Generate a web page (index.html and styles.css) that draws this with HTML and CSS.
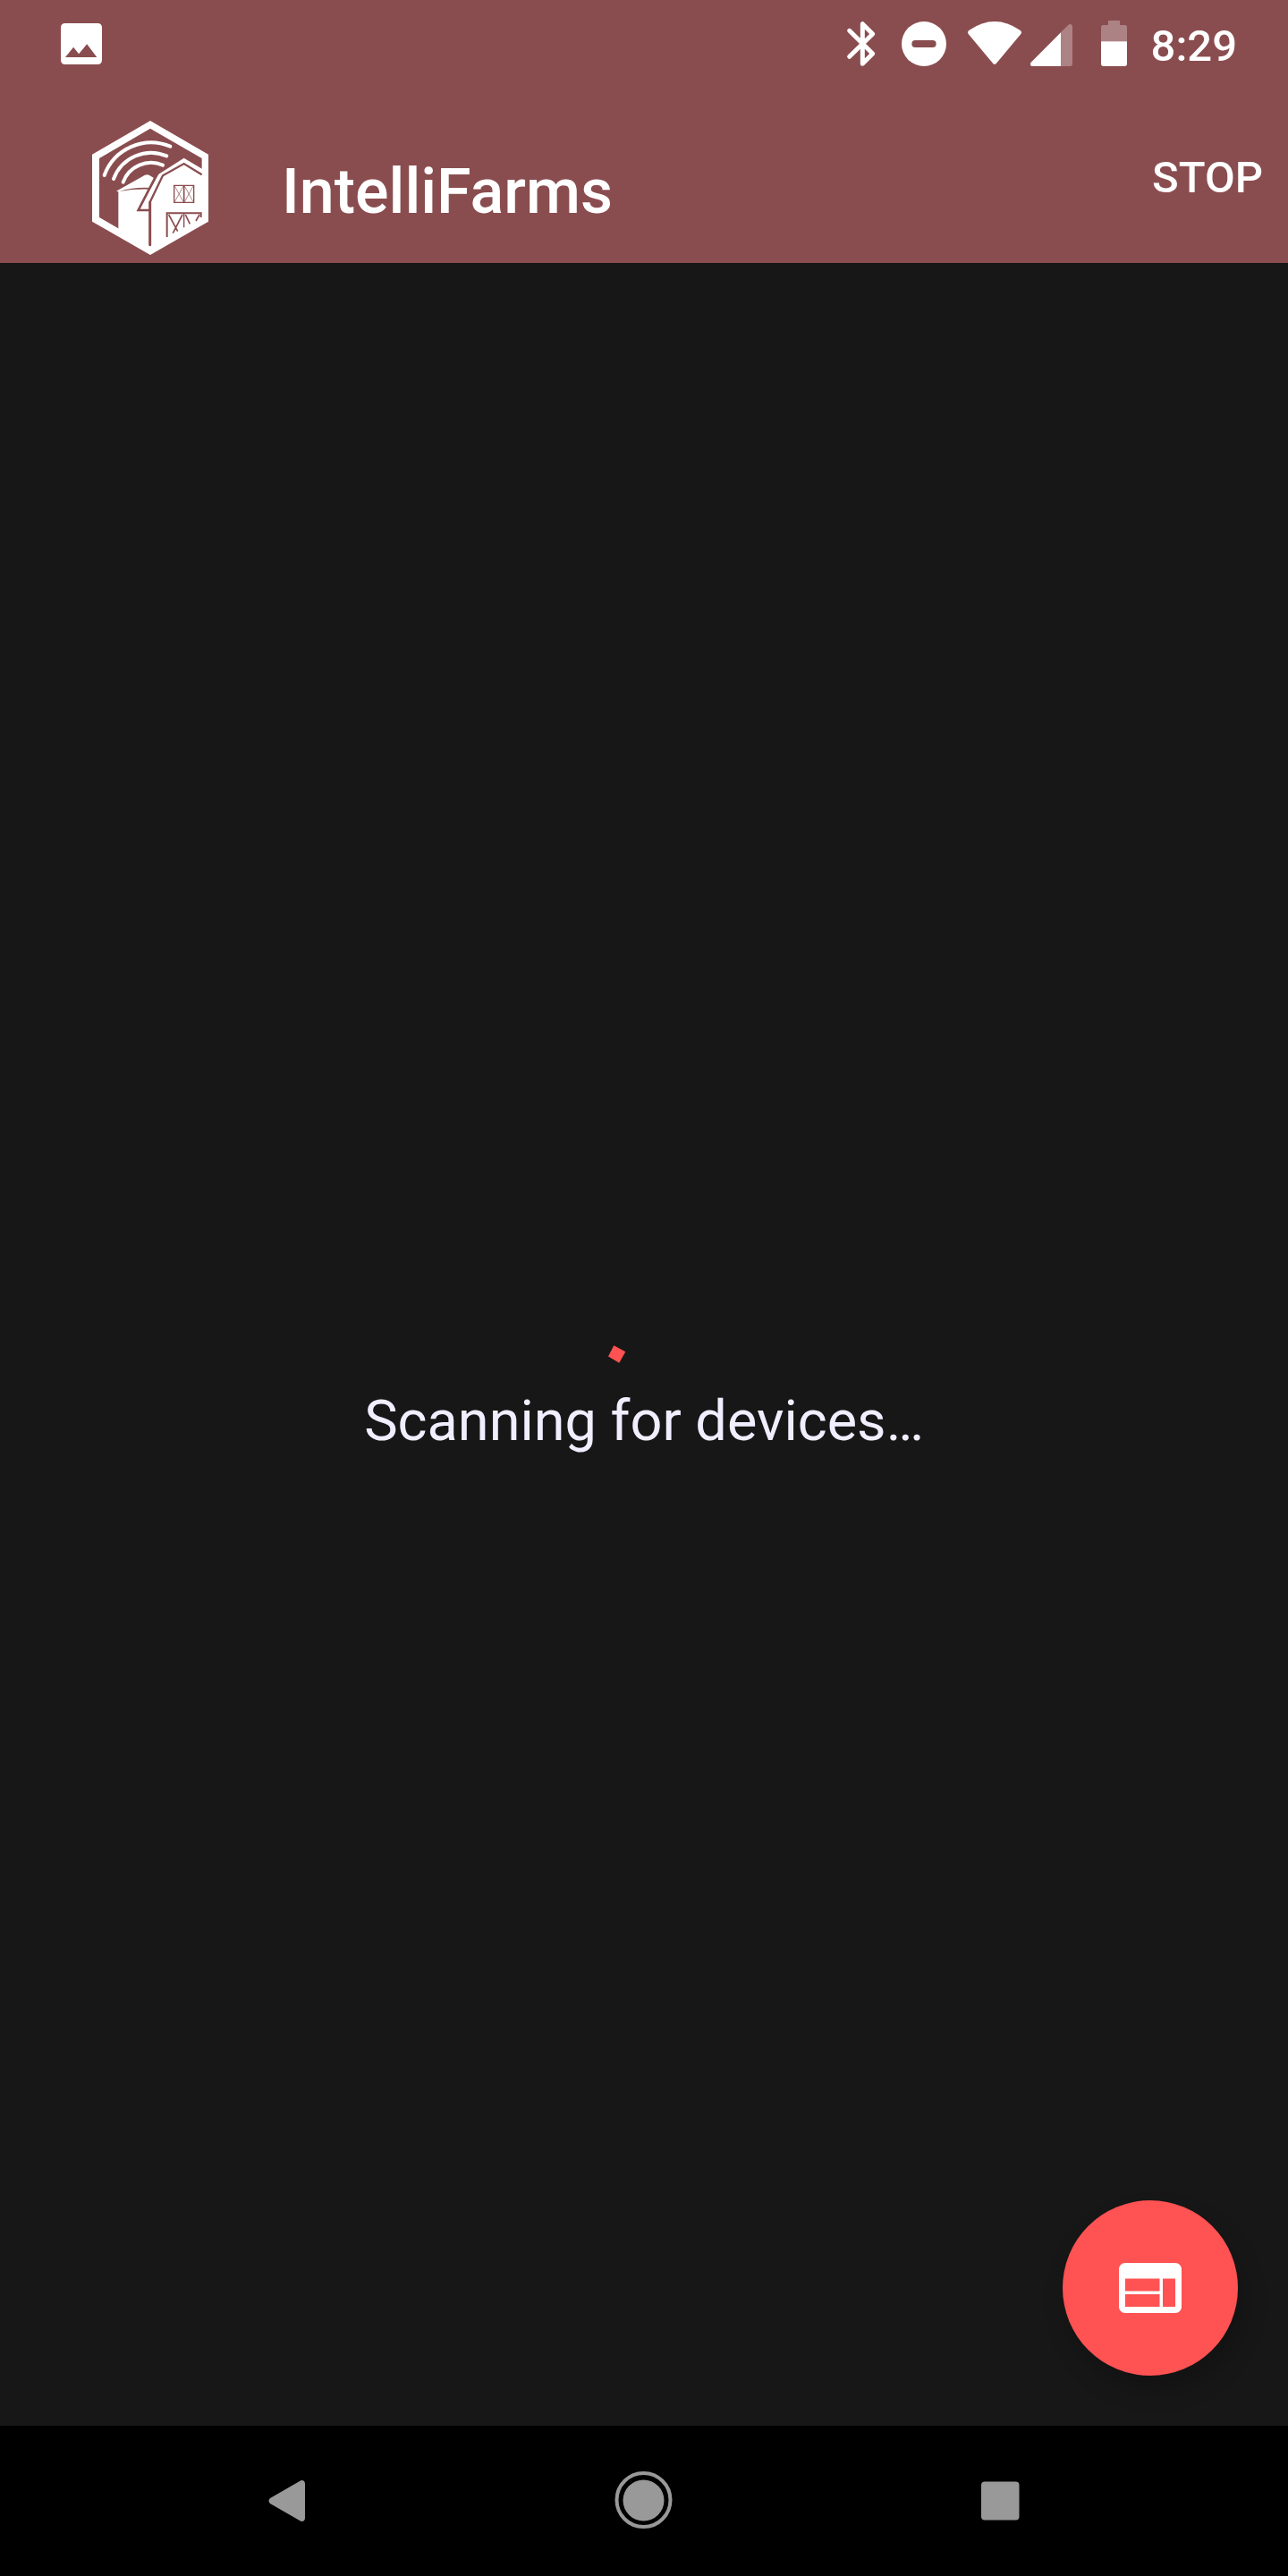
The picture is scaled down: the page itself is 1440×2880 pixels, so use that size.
FILE: index.html
```html
<!DOCTYPE html>
<html lang="en">
<head>
<meta charset="utf-8">
<meta name="viewport" content="width=device-width, initial-scale=1">
<title>IntelliFarms</title>
<link rel="stylesheet" href="styles.css">
</head>
<body>
<div class="screen">
  <header class="header">
    <div class="status-bar">
      <svg class="status-photo" viewBox="205 78 137 137" aria-hidden="true">
        <path fill="currentColor" fill-rule="evenodd" d="M220 78H327Q342 78 342 93V200Q342 215 327 215H220Q205 215 205 200V93Q205 78 220 78ZM220 191H325L292 147L265 180L247 158Z"/>
      </svg>
      <div class="status-icons">
        <svg class="icon-bluetooth" viewBox="81 72 111 150" aria-hidden="true">
          <path d="M89 190L167 114L133 80V214L167 180L89 103" fill="none" stroke="currentColor" stroke-width="15" stroke-linecap="round" stroke-linejoin="round"/>
        </svg>
        <svg class="icon-dnd" viewBox="264 72 150 150" aria-hidden="true">
          <circle cx="339" cy="147" r="75" fill="currentColor"/>
          <rect class="cutout" x="298" y="135" width="82" height="24" rx="12"/>
        </svg>
        <div class="network">
          <svg class="icon-wifi" viewBox="486 72 180 150" aria-hidden="true">
            <path fill="currentColor" d="M491 101Q576 43 661 101Q669 107 664 114L582 212Q576 219 570 212L488 114Q483 107 491 101Z"/>
          </svg>
          <svg class="icon-signal" viewBox="6 72 141 150" aria-hidden="true">
            <path fill="currentColor" fill-opacity=".3" d="M108 108L133 84Q138 79 143 82Q147 84 147 90V215Q147 222 140 222H108Z"/>
            <path fill="currentColor" d="M108 109V222H12Q6 222 6 216Q5 212 8 209Z"/>
          </svg>
        </div>
        <svg class="icon-battery" viewBox="219 72 120 150" aria-hidden="true">
          <path fill="currentColor" fill-opacity=".3" d="M267 69H306V84H322Q330 84 330 92V139H243V92Q243 84 251 84H267Z"/>
          <path fill="currentColor" d="M243 139H330V214Q330 222 322 222H251Q243 222 243 214Z"/>
        </svg>
        <time class="clock">8:29</time>
      </div>
    </div>
    <div class="app-bar">
      <div class="brand">
        <svg class="logo" viewBox="39 30 390 462" aria-hidden="true">
          <path fill="currentColor" d="M234 30L429 143V368L234 480L39 368V143Z"/>
          <path class="cutout" d="M234 56L407 156V354L234 453L63 354V156Z"/>
          <g fill="none" stroke="currentColor" stroke-width="12" stroke-linecap="round">
            <path d="M80 213A167 167 0 0 1 301 116"/>
            <path d="M111 225A134 134 0 0 1 289 148"/>
            <path d="M143 236A100 100 0 0 1 276 179"/>
          </g>
          <path fill="currentColor" d="M120 266L216 212Q223 209 230 212L246 222L236 260V460L127 396V268Z"/>
          <path fill="currentColor" d="M194 331L262 209L347 155L410 193V362L234 462V331Z"/>
          <path class="cutout" d="M130 267Q180 252 234 255V260Q180 258 130 267Z"/>
          <g class="lines" fill="none">
            <path stroke-width="8" d="M260 202L194 330H233"/>
            <path stroke-width="7" d="M407 211L347 174L276 214L233 303"/>
            <path stroke-width="9" stroke-linecap="round" d="M233 303V446"/>
            <path stroke-width="4" d="M314 247H380V304H314Z"/>
            <path stroke-width="5" d="M347 247V304"/>
            <path stroke-width="2" d="M316 249L345 302M345 249L316 302M349 249L378 302M378 249L349 302"/>
            <path stroke-width="6" d="M287 340H407M290 340V420M404 340V354"/>
            <path stroke-width="5" d="M296 345L326 401M342 345L310 407M352 345L367 376M399 345L387 366"/>
            <path stroke-width="4" d="M347 342V388"/>
          </g>
        </svg>
        <h1 class="title">IntelliFarms</h1>
      </div>
      <button class="stop" type="button">STOP</button>
    </div>
  </header>

  <main class="content">
    <div class="scan" role="status">
      <svg class="spinner" viewBox="0 0 172 172" aria-hidden="true">
        <path fill="currentColor" d="M52.300 125.300L65.300 132.300L58.300 144.700L46 137.500Z"/>
      </svg>
      <p class="scan-label">Scanning for devices…</p>
    </div>
    <button class="fab" type="button" aria-label="Web dashboard">
      <svg class="fab-icon" viewBox="0 0 24 24" aria-hidden="true">
        <path fill="currentColor" d="M20 4H4c-1.100 0-1.990.9-1.990 2L2 18c0 1.100.9 2 2 2h16c1.100 0 2-.9 2-2V6c0-1.100-.9-2-2-2zm-5 14H4v-4h11v4zm0-5H4V9h11v4zm5 5h-4V9h4v9z"/>
      </svg>
    </button>
  </main>

  <nav class="nav-bar" aria-label="System navigation">
    <button class="nav-button" type="button" aria-label="Back">
      <svg class="nav-icon" viewBox="0 0 84 84" aria-hidden="true">
        <path fill="currentColor" d="M22 39L55 20Q58 18 60 20Q61 21 61 23V61Q61 63 60 64Q58 66 55 64L22 45Q19 42 22 39Z"/>
      </svg>
    </button>
    <button class="nav-button" type="button" aria-label="Home">
      <svg class="nav-icon" viewBox="0 0 84 84" aria-hidden="true">
        <circle cx="41.500" cy="41" r="30" fill="none" stroke="currentColor" stroke-width="4"/>
        <circle cx="41.500" cy="41.500" r="23" fill="currentColor"/>
      </svg>
    </button>
    <button class="nav-button" type="button" aria-label="Recent apps">
      <svg class="nav-icon" viewBox="0 0 84 84" aria-hidden="true">
        <rect x="21" y="20.500" width="42.500" height="43" rx="4" fill="currentColor"/>
      </svg>
    </button>
  </nav>
</div>
</body>
</html>
```
FILE: styles.css
```css
:root {
  --bar: #8a4d4f;
  --surface: #171717;
  --accent: #ff5252;
  --text: #f0eeff;
}

* {
  box-sizing: border-box;
}

body {
  margin: 0;
  background: var(--surface);
  color: #fff;
  font-family: Roboto, sans-serif;
}

button {
  margin: 0;
  padding: 0;
  border: 0;
  background: none;
  color: inherit;
  font: inherit;
}

svg {
  display: block;
  flex: none;
  overflow: visible;
}

.screen {
  display: flex;
  flex-direction: column;
  min-height: 100vh;
}

.header {
  background: var(--bar);
}

.cutout {
  fill: var(--bar);
}

.lines {
  stroke: var(--bar);
}

.status-bar {
  display: flex;
  align-items: center;
  justify-content: space-between;
  height: 98px;
  padding: 0 57px 0 68px;
}

.status-photo {
  width: 46px;
  height: 46px;
}

.status-icons {
  display: flex;
  align-items: center;
  gap: 24px;
}

.icon-bluetooth {
  width: 37px;
  height: 50px;
}

.icon-dnd {
  width: 50px;
  height: 50px;
}

.network {
  display: flex;
  gap: 10px;
}

.icon-wifi {
  width: 60px;
  height: 50px;
}

.icon-signal {
  width: 47px;
  height: 50px;
}

.icon-battery {
  width: 40px;
  height: 50px;
}

.clock {
  padding-top: 4px;
  font-size: 49px;
  font-weight: 500;
}

.app-bar {
  display: flex;
  align-items: stretch;
  justify-content: space-between;
  height: 196px;
}

.brand {
  display: flex;
  align-items: center;
  gap: 82px;
  padding: 32px 0 0 103px;
}

.logo {
  width: 130px;
  height: 154px;
}

.title {
  margin: 0;
  padding-top: 4px;
  font-size: 70px;
  font-weight: 500;
}

.stop {
  padding: 4px 28px 0;
  font-size: 49px;
  font-weight: 500;
}

.content {
  position: relative;
  display: flex;
  flex: 1;
  align-items: center;
  justify-content: center;
}

.scan {
  display: flex;
  flex-direction: column;
  align-items: center;
}

.spinner {
  width: 172px;
  height: 172px;
  color: var(--accent);
}

.scan-label {
  margin: 0;
  color: var(--text);
  font-size: 63px;
  line-height: 76px;
}

.fab {
  position: absolute;
  right: 56px;
  bottom: 56px;
  display: flex;
  align-items: center;
  justify-content: center;
  width: 196px;
  height: 196px;
  border-radius: 50%;
  background: var(--accent);
  box-shadow: 6px 16px 28px rgba(0, 0, 0, .2);
}

.fab-icon {
  width: 84px;
  height: 84px;
}

.nav-bar {
  display: grid;
  grid-template-columns: repeat(3, 1fr);
  height: 168px;
  padding: 0 123px;
  background: #000;
}

.nav-button {
  display: flex;
  align-items: center;
  justify-content: center;
  color: #999;
}

.nav-icon {
  width: 84px;
  height: 84px;
}
```
